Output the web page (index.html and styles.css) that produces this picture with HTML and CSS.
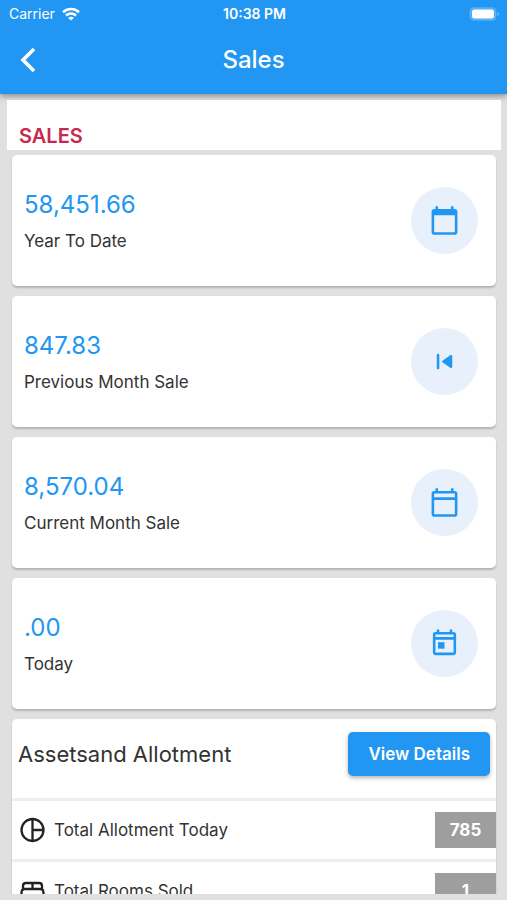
FILE: index.html
```html
<!DOCTYPE html>
<html lang="en">
<head>
    <meta charset="UTF-8">
    <meta name="viewport" content="width=device-width, initial-scale=1.0">
    <title>Sales</title>
    <link rel="stylesheet" href="styles.css">
</head>
<body>

    <header>
        <div class="status-bar">
            <div class="carrier">
                <span>Carrier</span>
                <svg class="wifi" viewBox="0 0 18 14" fill="none" stroke="currentColor" stroke-width="2.6">
                    <path d="M1 5.2C5.6 1 12.4 1 17 5.2"/>
                    <path d="M4 8.5c2.9-2.5 7.100-2.500 10 0"/>
                    <path d="M9 13.600L6.200 10.900c1.600-1.400 4-1.400 5.600 0z" fill="currentColor" stroke="none"/>
                </svg>
            </div>
            <span class="time">10:38 PM</span>
            <svg class="battery" viewBox="0 0 31 14">
                <rect x="1" y="0.700" width="26" height="12.600" rx="4" fill="#fff" fill-opacity=".2" stroke="#fff" stroke-opacity=".15" stroke-width="1.400"/>
                <rect x="3" y="2.500" width="22" height="9" rx="2.500" fill="#fff"/>
                <path d="M28.500 5v4c2-.7 2-3.300 0-4z" fill="#fff" fill-opacity=".4"/>
            </svg>
        </div>
        <nav class="navbar">
            <a href="#" class="back" aria-label="Back">
                <svg viewBox="0 0 16 26" fill="none" stroke="currentColor" stroke-width="3.600">
                    <path d="M14 2L3 13l11 11"/>
                </svg>
            </a>
            <h1>Sales</h1>
        </nav>
    </header>

    <main>
        <h2 class="section-title">SALES</h2>

        <div class="card">
            <div class="card-text">
                <div class="amount">58,451.66</div>
                <div class="label">Year To Date</div>
            </div>
            <div class="circle">
                <svg class="icon" viewBox="0 0 24 24" fill="currentColor">
                    <path d="M20 3h-1V1h-2v2H7V1H5v2H4c-1.100 0-2 .9-2 2v16c0 1.100.9 2 2 2h16c1.100 0 2-.9 2-2V5c0-1.100-.9-2-2-2zm0 18H4V8h16v13z"/>
                </svg>
            </div>
        </div>

        <div class="card">
            <div class="card-text">
                <div class="amount">847.83</div>
                <div class="label">Previous Month Sale</div>
            </div>
            <div class="circle">
                <svg class="icon" viewBox="0 0 24 24" fill="currentColor">
                    <path d="M7 6c.55 0 1 .45 1 1v10c0 .55-.45 1-1 1s-1-.45-1-1V7c0-.55.45-1 1-1zm3.660 6.820l5.770 4.070c.66.470 1.580-.01 1.580-.82V7.930c0-.81-.91-1.280-1.580-.82l-5.770 4.070c-.57.4-.57 1.240 0 1.640z"/>
                </svg>
            </div>
        </div>

        <div class="card">
            <div class="card-text">
                <div class="amount">8,570.04</div>
                <div class="label">Current Month Sale</div>
            </div>
            <div class="circle">
                <svg class="icon" viewBox="0 0 24 24" fill="currentColor">
                    <path d="M20 3h-1V1h-2v2H7V1H5v2H4c-1.100 0-2 .9-2 2v16c0 1.100.9 2 2 2h16c1.100 0 2-.9 2-2V5c0-1.100-.9-2-2-2zm0 18H4V10h16v11zm0-13H4V5h16v3z"/>
                </svg>
            </div>
        </div>

        <div class="card">
            <div class="card-text">
                <div class="amount">.00</div>
                <div class="label">Today</div>
            </div>
            <div class="circle">
                <svg class="icon" viewBox="0 0 24 24" fill="currentColor">
                    <path d="M19 3h-1V2c0-.55-.45-1-1-1s-1 .45-1 1v1H8V2c0-.55-.45-1-1-1s-1 .45-1 1v1H5c-1.110 0-2 .9-2 2v14c0 1.100.89 2 2 2h14c1.100 0 2-.9 2-2V5c0-1.100-.9-2-2-2zm0 16H5V9h14v10zm0-12H5V5h14v2z"/>
                    <path d="M7 11h5v5H7z"/>
                </svg>
            </div>
        </div>

        <div class="assets">
            <div class="assets-header">
                <h3>Assetsand Allotment</h3>
                <button type="button">View Details</button>
            </div>
            <div class="row">
                <svg class="row-icon" viewBox="0 0 26 26" fill="none" stroke="currentColor" stroke-width="2.300">
                    <circle cx="12.500" cy="13" r="11"/>
                    <path d="M12.500 2v22M12.500 13h11"/>
                </svg>
                <span class="row-label">Total Allotment Today</span>
                <span class="badge">785</span>
            </div>
            <div class="row">
                <svg class="row-icon" viewBox="0 0 26 26" fill="none" stroke="currentColor" stroke-width="2.300">
                    <path d="M3 12V8c0-2 1-3 3-3h13c2 0 3 1 3 3v4M12.500 5v6M1.500 23v-8c0-2.500 1-4 3-4h16c2 0 3 1.500 3 4v8M1.500 19h22"/>
                </svg>
                <span class="row-label">Total Rooms Sold</span>
                <span class="badge">1</span>
            </div>
        </div>
    </main>

</body>
</html>
```
FILE: styles.css
```css
* {
    box-sizing: border-box;
}

body {
    font-family: Inter, sans-serif;
    margin: 0;
    height: 100vh;
    display: flex;
    flex-direction: column;
    background-color: #e0e0e0;
    color: #333;
}

h1,
h2,
h3 {
    margin: 0;
}

svg {
    display: block;
}

header {
    background-color: #2196f3;
    color: white;
    box-shadow: 0 2px 6px rgba(0, 0, 0, 0.4);
}

.status-bar {
    display: grid;
    grid-template-columns: 1fr auto 1fr;
    align-items: center;
    height: 27px;
    padding: 0 7px 0 9px;
    font-size: 14px;
}

.carrier {
    display: flex;
    align-items: center;
    gap: 7px;
}

.wifi {
    width: 18px;
    height: 14px;
}

.time {
    font-weight: 600;
}

.battery {
    width: 31px;
    height: 14px;
    justify-self: end;
}

.navbar {
    display: grid;
    grid-template-columns: 1fr auto 1fr;
    align-items: center;
    height: 67px;
    padding: 0 20px 2px;
}

.back {
    color: white;
}

.back svg {
    width: 16px;
    height: 26px;
}

.navbar h1 {
    font-size: 24px;
    font-weight: 500;
}

main {
    flex: 1;
    min-height: 0;
    overflow: hidden;
    margin: 6px 6px 6px 7px;
}

.section-title {
    padding: 24px 12px 2px;
    margin-bottom: 5px;
    background: white;
    color: #c9284f;
    font-size: 20px;
    line-height: 24px;
    font-weight: 600;
}

.card,
.assets {
    margin: 0 5px 10px;
    background: white;
    border-radius: 5px;
    box-shadow: 0 2px 2px rgba(0, 0, 0, 0.2);
}

.card {
    display: flex;
    justify-content: space-between;
    align-items: center;
    padding: 32px 18px 32px 12px;
}

.card-text {
    display: flex;
    flex-direction: column;
    gap: 8px;
}

.amount {
    color: #2196f3;
    font-size: 24px;
    line-height: 32px;
}

.label {
    font-size: 17px;
    line-height: 24px;
}

.circle {
    display: flex;
    justify-content: center;
    align-items: center;
    width: 67px;
    height: 67px;
    border-radius: 50%;
    background: #e8f1fb;
    color: #2196f3;
}

.icon {
    width: 31px;
    height: 31px;
}

.assets-header {
    display: flex;
    justify-content: space-between;
    align-items: center;
    padding: 13px 6px 22px;
}

.assets h3 {
    font-size: 22px;
    font-weight: 400;
}

button {
    height: 44px;
    padding: 0 20px;
    border: none;
    border-radius: 5px;
    background-color: #2196f3;
    box-shadow: 0 2px 4px rgba(0, 0, 0, 0.3);
    color: white;
    font-family: inherit;
    font-size: 17px;
    font-weight: 600;
    cursor: pointer;
}

.row {
    display: flex;
    align-items: center;
    height: 61px;
    padding-left: 8px;
    border-top: 3px solid #eee;
}

.row-icon {
    width: 26px;
    height: 26px;
    margin-right: 8px;
    color: #222;
}

.row-label {
    flex: 1;
    font-size: 17px;
}

.badge {
    min-width: 61px;
    padding: 6px 12px;
    background: #9e9e9e;
    color: white;
    font-size: 17px;
    line-height: 24px;
    font-weight: 700;
    text-align: center;
}
```
